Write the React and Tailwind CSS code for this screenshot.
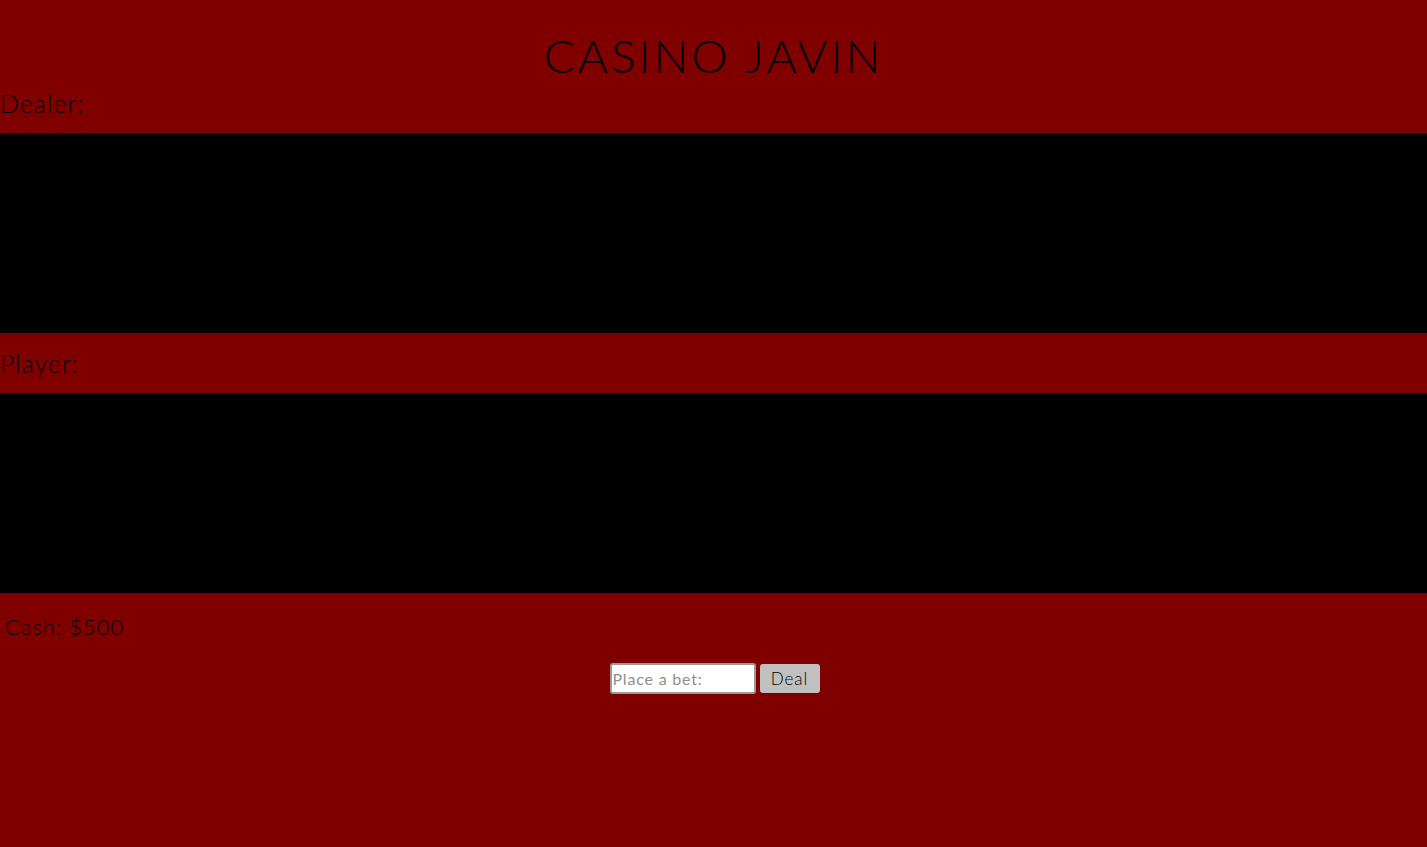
export default function App() {
  return (
    <div className="min-h-[847px] w-full bg-[#800000] text-black" style={{ fontFamily: '"Lato", "Open Sans", sans-serif' }}>
      <h1 className="pt-[28px] text-center text-[46px] font-light leading-[56px] tracking-[3px]">CASINO JAVIN</h1>
      <div className="h-[49px] text-[25px] leading-[38px] font-light tracking-[1px]">Dealer:</div>
      <div className="h-[200px] bg-black" />
      <div className="h-[60px] text-[25px] leading-[60px] font-light tracking-[1px]">Player:</div>
      <div className="h-[200px] bg-black" />
      <div className="pl-[5px] pt-[21px] h-[70px] text-[22px] leading-[26px] font-light tracking-[1px]">Cash: $500</div>
      <div className="flex justify-center gap-[4px] items-center pl-[2px]">
        <input
          placeholder="Place a bet:"
          className="h-[31px] w-[146px] rounded-[3px] border-2 border-[#9a9a9a] bg-white px-[1px] text-[16px] tracking-[0.8px] placeholder:text-[#8f8f8f] outline-none"
        />
        <button className="h-[29px] w-[60px] rounded-[3px] bg-[#c0c0c0] text-[17px] font-light tracking-[1px]">Deal</button>
      </div>
    </div>
  );
}
